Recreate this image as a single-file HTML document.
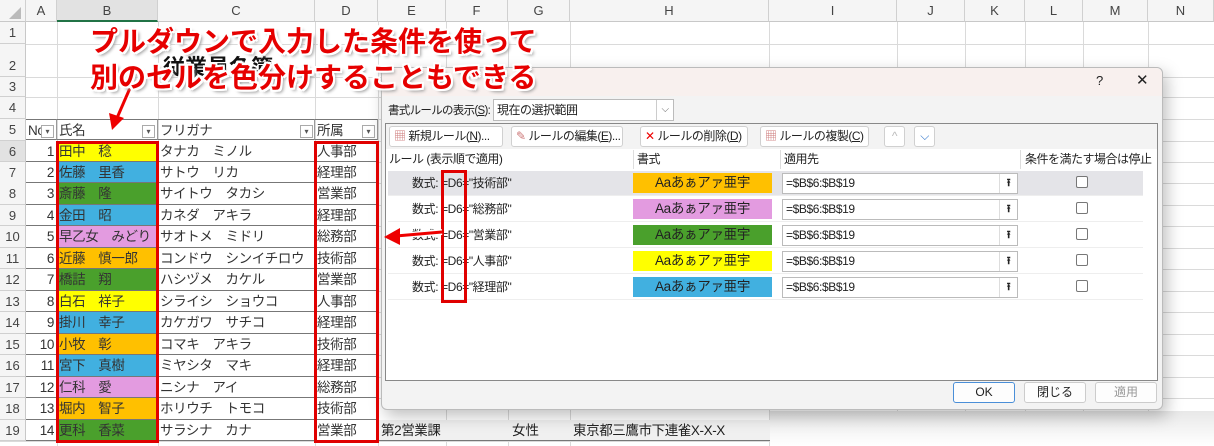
<!DOCTYPE html>
<html><head><meta charset="utf-8">
<style>
*{box-sizing:border-box;margin:0;padding:0}
body{width:1214px;height:446px;overflow:hidden;background:#fff;font-family:"Liberation Sans","Noto Sans CJK JP",sans-serif;position:relative;color:#222}
.a{position:absolute}
.vl{position:absolute;top:0;width:1px;height:446px;background:#dadada}
.hl{position:absolute;left:0;width:1214px;height:1px;background:#dadada}
.ch{position:absolute;top:0;height:22px;font-size:13px;color:#444;text-align:center;line-height:22px;background:#f5f5f5;border-right:1px solid #d0d0d0;border-bottom:1px solid #c8c8c8}
.rh{position:absolute;left:0;width:26px;font-size:13px;color:#444;text-align:center;background:#f5f5f5;border-bottom:1px solid #d0d0d0;border-right:1px solid #c8c8c8}
.c{position:absolute;height:21.47px;font-size:13.5px;letter-spacing:-0.4px;line-height:21px;white-space:nowrap;overflow:hidden;border-bottom:1px solid #777;border-right:1px solid #999;color:#333}
.red{position:absolute;border:3px solid #e00000}
.big{position:absolute;font-size:28px;color:#e60000;font-weight:bold;white-space:nowrap;letter-spacing:0px;
text-shadow:2px 2px 0 #fff,-2px -2px 0 #fff,2px -2px 0 #fff,-2px 2px 0 #fff,0 2px 0 #fff,2px 0 0 #fff,0 -2px 0 #fff,-2px 0 0 #fff,3px 3px 3px #999}
.dd{position:absolute;width:13px;height:13px;border:1px solid #aaa;background:#fff;font-size:8px;text-align:center;line-height:11px;color:#555}
.dl{font-size:12px;letter-spacing:-0.5px;white-space:nowrap}
.btn{position:absolute;top:126px;height:21px;background:#fff;border:1px solid #d0d0d0;border-radius:3px;font-size:12px;letter-spacing:-0.5px;line-height:19px;padding-left:4px;white-space:nowrap}
.rule{position:absolute;left:388px;width:755px;height:25px;font-size:12px;letter-spacing:-0.4px;border-bottom:1px solid #eee}
.rule>span{position:absolute;left:24px;top:0;line-height:25px}
.sw{position:absolute;left:245px;top:2px;width:139px;height:20px;text-align:center;font-size:13.5px;line-height:20px;letter-spacing:-0.3px}
.ap{position:absolute;left:394px;top:2px;width:236px;height:21px;background:#fff;border:1px solid #bbb;font-size:12px;line-height:19px;padding-left:3px}
.ap b{position:absolute;right:0;top:0;width:18px;height:19px;border-left:1px solid #ddd;font-size:11px;text-align:center}
.cb{position:absolute;left:688px;top:5px;width:12px;height:12px;border:1px solid #777;border-radius:2px;background:#fff}
.fb{position:absolute;top:382px;width:62px;height:21px;border:1px solid #ccc;border-radius:3px;background:#fdfdfd;font-size:12px;text-align:center;line-height:19px}
</style></head><body>
<div class="vl" style="left:57px"></div><div class="vl" style="left:158px"></div><div class="vl" style="left:315px"></div><div class="vl" style="left:378px"></div><div class="vl" style="left:446px"></div><div class="vl" style="left:508px"></div><div class="vl" style="left:570px"></div><div class="vl" style="left:769px"></div><div class="vl" style="left:897px"></div><div class="vl" style="left:965px"></div><div class="vl" style="left:1025px"></div><div class="vl" style="left:1083px"></div><div class="vl" style="left:1148px"></div>
<div class="hl" style="top:44px"></div><div class="hl" style="top:77px"></div><div class="hl" style="top:97px"></div><div class="hl" style="top:119px"></div>
<div class="hl" style="top:140.5px"></div><div class="hl" style="top:162px"></div><div class="hl" style="top:183.4px"></div><div class="hl" style="top:204.9px"></div><div class="hl" style="top:226.4px"></div><div class="hl" style="top:247.8px"></div><div class="hl" style="top:269.3px"></div><div class="hl" style="top:290.8px"></div><div class="hl" style="top:312.2px"></div><div class="hl" style="top:333.7px"></div><div class="hl" style="top:355.2px"></div><div class="hl" style="top:376.6px"></div><div class="hl" style="top:398.1px"></div><div class="hl" style="top:419.6px"></div><div class="hl" style="top:441px"></div>
<div class="ch" style="left:0;width:26px"><svg width="20" height="20" style="margin-top:1px"><polygon points="18,6 18,18 6,18" fill="#bbb"/></svg></div>
<div class="ch" style="left:26px;width:31px">A</div>
<div class="ch" style="left:57px;width:101px;background:#e2e2e2;border-bottom:2px solid #217346">B</div>
<div class="ch" style="left:158px;width:157px">C</div>
<div class="ch" style="left:315px;width:63px">D</div>
<div class="ch" style="left:378px;width:68px">E</div>
<div class="ch" style="left:446px;width:62px">F</div>
<div class="ch" style="left:508px;width:62px">G</div>
<div class="ch" style="left:570px;width:199px">H</div>
<div class="ch" style="left:769px;width:128px">I</div>
<div class="ch" style="left:897px;width:68px">J</div>
<div class="ch" style="left:965px;width:60px">K</div>
<div class="ch" style="left:1025px;width:58px">L</div>
<div class="ch" style="left:1083px;width:65px">M</div>
<div class="ch" style="left:1148px;width:66px">N</div>
<div class="rh" style="top:22px;height:22px;line-height:22px">1</div>
<div class="rh" style="top:44px;height:33px;line-height:44px">2</div>
<div class="rh" style="top:77px;height:20px;line-height:20px">3</div>
<div class="rh" style="top:97px;height:22px;line-height:22px">4</div>
<div class="rh" style="top:119px;height:21.5px;line-height:21px">5</div>
<div class="rh" style="top:140.5px;height:21.5px;line-height:21px;background:#e2e2e2">6</div>
<div class="rh" style="top:162px;height:21.5px;line-height:21px">7</div>
<div class="rh" style="top:183.4px;height:21.5px;line-height:21px">8</div>
<div class="rh" style="top:204.9px;height:21.5px;line-height:21px">9</div>
<div class="rh" style="top:226.4px;height:21.5px;line-height:21px">10</div>
<div class="rh" style="top:247.8px;height:21.5px;line-height:21px">11</div>
<div class="rh" style="top:269.3px;height:21.5px;line-height:21px">12</div>
<div class="rh" style="top:290.8px;height:21.5px;line-height:21px">13</div>
<div class="rh" style="top:312.2px;height:21.5px;line-height:21px">14</div>
<div class="rh" style="top:333.7px;height:21.5px;line-height:21px">15</div>
<div class="rh" style="top:355.2px;height:21.5px;line-height:21px">16</div>
<div class="rh" style="top:376.6px;height:21.5px;line-height:21px">17</div>
<div class="rh" style="top:398.1px;height:21.5px;line-height:21px">18</div>
<div class="rh" style="top:419.6px;height:21.5px;line-height:21px">19</div>

<div class="a" style="left:163px;top:50px;font-size:22px;font-weight:bold;color:#111">従業員名簿</div>

<div class="c" style="left:26px;top:119px;width:31px;border-top:1px solid #777;padding-left:2px">No</div><div class="dd" style="left:41px;top:125px">▾</div>
<div class="c" style="left:57px;top:119px;width:101px;border-top:1px solid #777;padding-left:2px">氏名</div><div class="dd" style="left:142px;top:125px">▾</div>
<div class="c" style="left:158px;top:119px;width:157px;border-top:1px solid #777;padding-left:2px">フリガナ</div><div class="dd" style="left:300px;top:125px">▾</div>
<div class="c" style="left:315px;top:119px;width:63px;border-top:1px solid #777;padding-left:2px">所属</div><div class="dd" style="left:362px;top:125px">▾</div>

<div id="rows"></div>
<script>
var d=[[1,"田中　稔","#ffff00","タナカ　ミノル","人事部"],[2,"佐藤　里香","#41b0e0","サトウ　リカ","経理部"],[3,"斎藤　隆","#4aa02c","サイトウ　タカシ","営業部"],[4,"金田　昭","#41b0e0","カネダ　アキラ","経理部"],[5,"早乙女　みどり","#e39be0","サオトメ　ミドリ","総務部"],[6,"近藤　慎一郎","#ffc000","コンドウ　シンイチロウ","技術部"],[7,"橋詰　翔","#4aa02c","ハシヅメ　カケル","営業部"],[8,"白石　祥子","#ffff00","シライシ　ショウコ","人事部"],[9,"掛川　幸子","#41b0e0","カケガワ　サチコ","経理部"],[10,"小牧　彰","#ffc000","コマキ　アキラ","技術部"],[11,"宮下　真樹","#41b0e0","ミヤシタ　マキ","経理部"],[12,"仁科　愛","#e39be0","ニシナ　アイ","総務部"],[13,"堀内　智子","#ffc000","ホリウチ　トモコ","技術部"],[14,"更科　香菜","#4aa02c","サラシナ　カナ","営業部"]];
var h="";for(var i=0;i<14;i++){var t=140.5+i*21.47;var r=d[i];
h+='<div class="c" style="left:26px;top:'+t+'px;width:31px;text-align:right;padding-right:2px;background:#fff">'+r[0]+'</div>';
h+='<div class="c" style="left:57px;top:'+t+'px;width:101px;padding-left:2px;background:'+r[2]+'">'+r[1]+'</div>';
h+='<div class="c" style="left:158px;top:'+t+'px;width:157px;padding-left:2px;background:#fff">'+r[3]+'</div>';
h+='<div class="c" style="left:315px;top:'+t+'px;width:63px;padding-left:2px;background:#fff">'+r[4]+'</div>';}
document.getElementById("rows").innerHTML=h;
</script>
<div class="a" style="left:378px;top:419.6px;width:392px;height:21.5px;background:#f0f0f0;border-bottom:1px solid #777"></div>
<div class="a" style="left:381px;top:420px;font-size:13.5px;line-height:21px;letter-spacing:-0.4px">第2営業課</div>
<div class="a" style="left:512px;top:420px;font-size:13.5px;line-height:21px">女性</div>
<div class="a" style="left:573px;top:420px;font-size:13.5px;line-height:21px;letter-spacing:-0.4px">東京都三鷹市下連雀X-X-X</div>
<div class="a" style="left:770px;top:411px;width:444px;height:35px;background:linear-gradient(#e8e8e8,#fff)"></div>

<div class="a" style="left:381px;top:67px;width:782px;height:343px;background:#f3f3f3;border:1px solid #bbb;border-radius:6px;box-shadow:4px 6px 16px rgba(0,0,0,.25)">
 <div class="a" style="left:0;top:0;width:780px;height:28px;background:#f8f0ee;border-radius:6px 6px 0 0"></div>
 <div class="a" style="left:714px;top:5px;font-size:13px">?</div>
 <div class="a" style="left:754px;top:3px;font-size:15px">✕</div>
</div>
<div class="a dl" style="left:388px;top:102px;font-size:11.5px;letter-spacing:-0.7px">書式ルールの表示(<u>S</u>):</div>
<div class="a dl" style="left:493px;top:99px;width:181px;height:22px;background:#fff;border:1px solid #bbb;line-height:20px;padding-left:3px">現在の選択範囲<span style="position:absolute;right:0;top:0;width:17px;height:20px;border-left:1px solid #ccc;text-align:center;font-size:10px;color:#666">⌵</span></div>
<div class="a" style="left:385px;top:123px;width:773px;height:258px;background:#fff;border:1px solid #888"></div>
<div class="a" style="left:386px;top:124px;width:771px;height:25px;background:#f3f3f3"></div>
<div class="btn" style="left:389px;width:114px"><span style="color:#c77">▦</span> 新規ルール(<u>N</u>)...</div>
<div class="btn" style="left:511px;width:112px"><span style="color:#c77">✎</span> ルールの編集(<u>E</u>)...</div>
<div class="btn" style="left:640px;width:108px"><span style="color:#e00">✕</span> ルールの削除(<u>D</u>)</div>
<div class="btn" style="left:760px;width:109px"><span style="color:#c77">▦</span> ルールの複製(<u>C</u>)</div>
<div class="btn" style="left:884px;width:21px;color:#bbb;text-align:center;padding:0">^</div>
<div class="btn" style="left:914px;width:21px;color:#37c;text-align:center;padding:0">⌵</div>
<div class="a dl" style="left:386px;top:150px;width:757px;height:19px;line-height:18px">
 <span class="a" style="left:3px">ルール (表示順で適用)</span>
 <span class="a" style="left:247px;top:0;width:1px;height:19px;background:#ddd"></span><span class="a" style="left:251px">書式</span>
 <span class="a" style="left:394px;top:0;width:1px;height:19px;background:#ddd"></span><span class="a" style="left:398px">適用先</span>
 <span class="a" style="left:634px;top:0;width:1px;height:19px;background:#ddd"></span><span class="a" style="left:639px">条件を満たす場合は停止</span>
</div>
<div class="rule" style="top:171px;background:#e4e4e8"><span>数式: =D6="技術部"</span><div class="sw" style="background:#ffc000">Aaあぁアァ亜宇</div><div class="ap">=$B$6:$B$19<b>⭱</b></div><div class="cb"></div></div>
<div class="rule" style="top:197px"><span>数式: =D6="総務部"</span><div class="sw" style="background:#e39be0">Aaあぁアァ亜宇</div><div class="ap">=$B$6:$B$19<b>⭱</b></div><div class="cb"></div></div>
<div class="rule" style="top:223px"><span>数式: =D6="営業部"</span><div class="sw" style="background:#4aa02c">Aaあぁアァ亜宇</div><div class="ap">=$B$6:$B$19<b>⭱</b></div><div class="cb"></div></div>
<div class="rule" style="top:249px"><span>数式: =D6="人事部"</span><div class="sw" style="background:#ffff00">Aaあぁアァ亜宇</div><div class="ap">=$B$6:$B$19<b>⭱</b></div><div class="cb"></div></div>
<div class="rule" style="top:275px"><span>数式: =D6="経理部"</span><div class="sw" style="background:#41b0e0">Aaあぁアァ亜宇</div><div class="ap">=$B$6:$B$19<b>⭱</b></div><div class="cb"></div></div>
<div class="fb" style="left:953px;border-color:#4a8fd8">OK</div>
<div class="fb" style="left:1024px">閉じる</div>
<div class="fb" style="left:1095px;color:#999">適用</div>

<div class="red" style="left:56px;top:141px;width:103px;height:302px"></div>
<div class="red" style="left:314px;top:141px;width:65px;height:302px"></div>
<div class="red" style="left:441px;top:170px;width:26px;height:133px"></div>
<svg class="a" style="left:0;top:0" width="1214" height="446">
 <line x1="442" y1="232" x2="396" y2="236" stroke="#fff" stroke-width="6"/>
 <line x1="442" y1="232" x2="396" y2="236" stroke="#e00" stroke-width="3"/>
 <polygon points="384,237 400,228 400,245" fill="#e00"/>
 <line x1="130" y1="88" x2="117" y2="118" stroke="#fff" stroke-width="6"/>
 <line x1="130" y1="88" x2="117" y2="118" stroke="#e00" stroke-width="3"/>
 <polygon points="112,130 109,113 124,118" fill="#e00"/>
</svg>
<div class="big" style="left:90px;top:20px">プルダウンで入力した条件を使って</div>
<div class="big" style="left:90px;top:56px">別のセルを色分けすることもできる</div>
</body></html>
